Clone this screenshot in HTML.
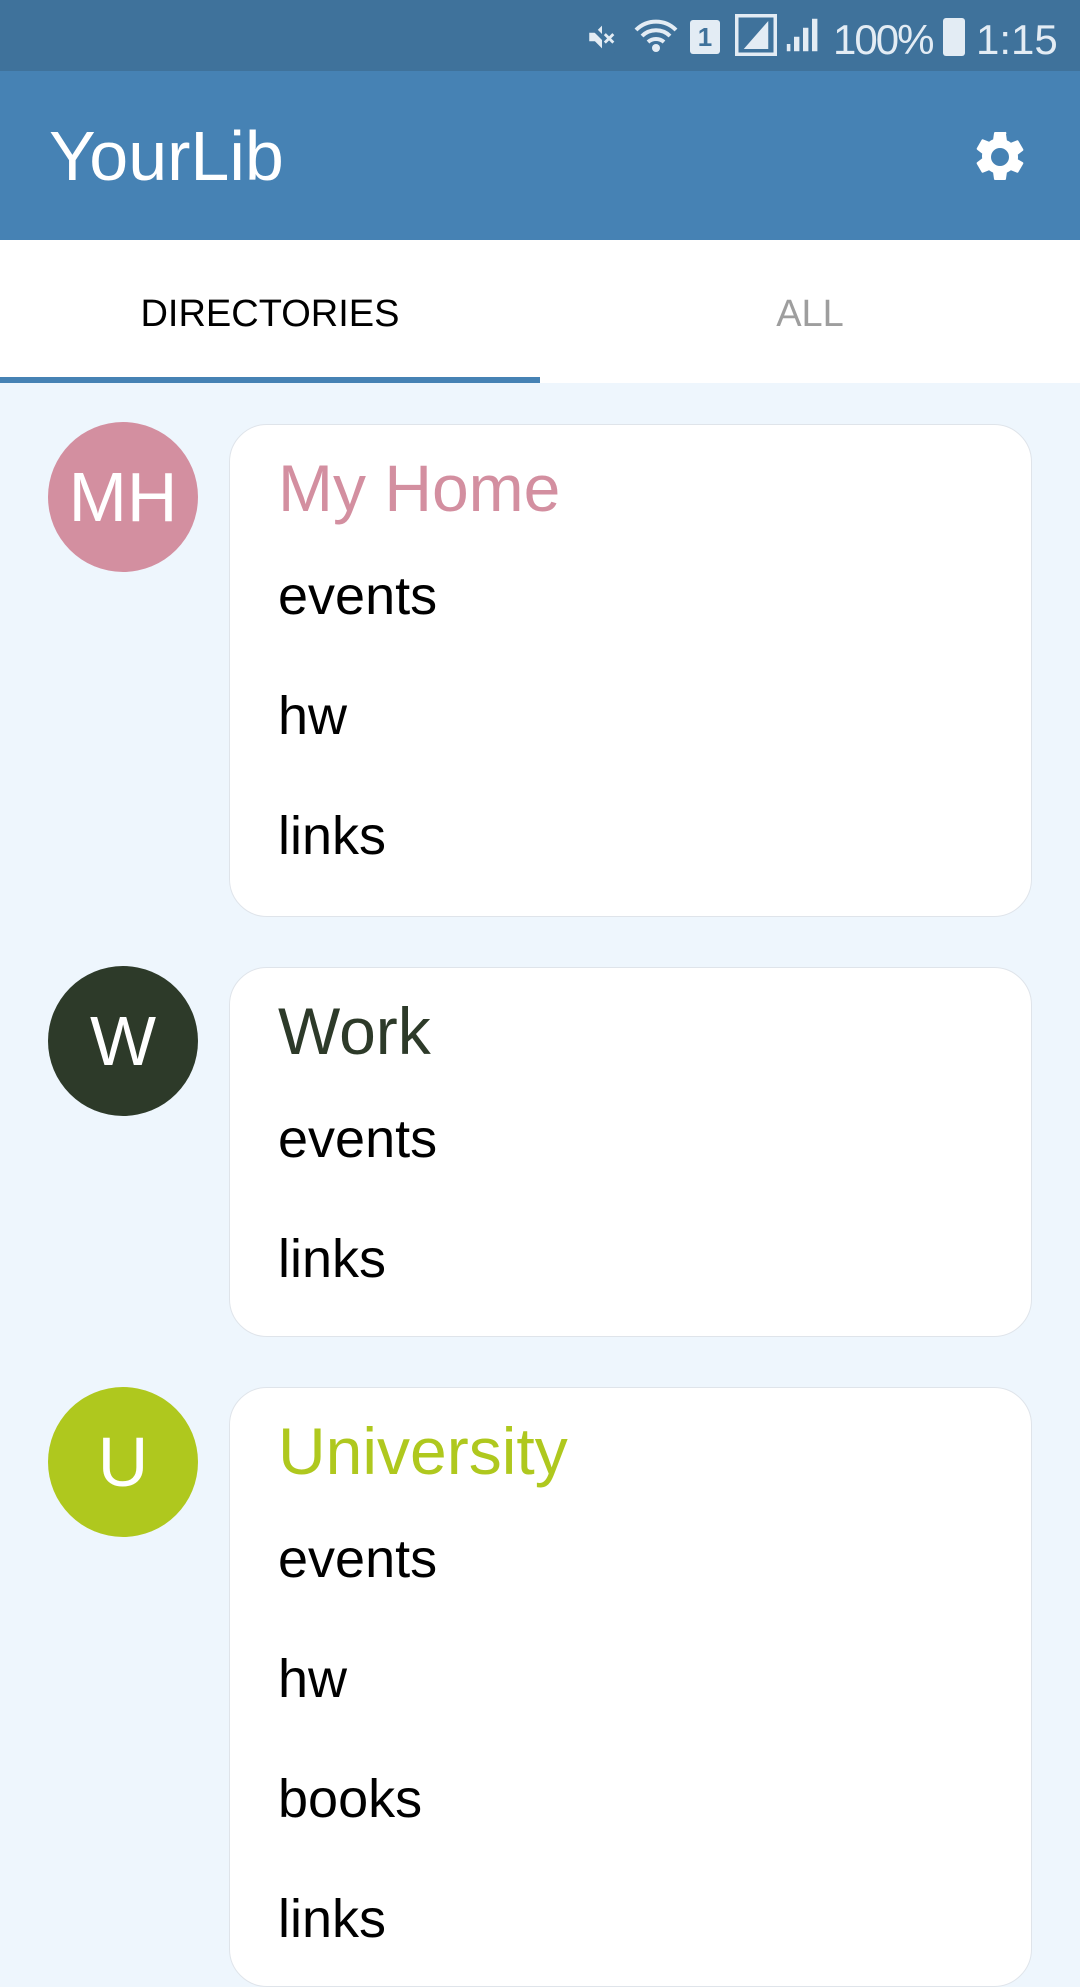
<!DOCTYPE html>
<html><head><meta charset="utf-8"><style>
*{margin:0;padding:0;box-sizing:border-box}
body{width:1080px;height:1920px;overflow:hidden;background:#EEF6FD;font-family:"Liberation Sans",sans-serif;position:relative}
.sb{position:absolute;left:0;top:0;width:1080px;height:71px;background:#3F729B;color:#E3ECF4;font-size:42px}
.ab{position:absolute;left:0;top:71px;width:1080px;height:169px;background:#4682B4}
.ab .t{position:absolute;left:49px;top:50px;color:#fff;font-size:70px;line-height:1}
.tabs{position:absolute;left:0;top:240px;width:1080px;height:143px;background:#fff}
.tab{position:absolute;top:55px;width:540px;text-align:center;font-size:38px;line-height:1}
.ind{position:absolute;left:0;top:377px;width:540px;height:6px;background:#4682B4}
.av{position:absolute;left:48px;width:150px;height:150px;border-radius:50%;color:#fff;font-size:70px;text-align:center;line-height:150px}
.card{position:absolute;left:229px;width:803px;background:#fff;border:1px solid #dfe4ea;border-radius:38px}
.ti{position:absolute;left:48px;font-size:66px;line-height:1}
.it{position:absolute;left:48px;font-size:54px;line-height:1;color:#000}
</style></head><body>
<div class="sb">
<svg style="position:absolute;left:585px;top:20px" width="34" height="34" viewBox="0 0 24 24"><path fill="#E3ECF4" d="M3 9h4l5-5v16l-5-5H3z"/><path stroke="#3F729B" stroke-width="3" d="M2 2l20 20"/><path stroke="#E3ECF4" stroke-width="2" d="M14 10l6 6M20 10l-6 6"/></svg>
<svg style="position:absolute;left:632px;top:16px" width="48" height="40" viewBox="0 0 24 20"><path fill="none" stroke="#E3ECF4" stroke-width="2" d="M2 7a14 14 0 0 1 20 0M5 10a10 10 0 0 1 14 0M8 13a6 6 0 0 1 8 0"/><circle cx="12" cy="16" r="2" fill="#E3ECF4"/></svg>
<div style="position:absolute;left:690px;top:20px;width:30px;height:34px;background:#E3ECF4;border-radius:3px;color:#3F729B;font-size:26px;font-weight:bold;text-align:center;line-height:34px">1</div>
<svg style="position:absolute;left:735px;top:14px" width="42" height="42" viewBox="0 0 24 24"><rect x="1" y="1" width="22" height="22" fill="none" stroke="#E3ECF4" stroke-width="2"/><path fill="#E3ECF4" d="M19 4v16H5z"/></svg>
<svg style="position:absolute;left:785px;top:16px" width="36" height="38" viewBox="0 0 20 20"><path fill="#E3ECF4" d="M18 1v18h-3V1zM13 6v13h-3V6zM8 11v8H5v-8zM3 15v4H1v-4z"/></svg>
<div style="position:absolute;left:833px;top:16px;letter-spacing:-2px">100%</div>
<div style="position:absolute;left:943px;top:18px;width:22px;height:38px;background:#E3ECF4;border-radius:3px"></div>
<div style="position:absolute;left:976px;top:16px">1:15</div>
</div>
<div class="ab"><div class="t">YourLib</div>
<svg style="position:absolute;left:970px;top:56px" width="60" height="60" viewBox="0 0 24 24"><path fill="#fff" d="M19.14 12.94c.04-.3.06-.61.06-.94s-.02-.64-.07-.94l2.03-1.58a.49.49 0 0 0 .12-.61l-1.92-3.320a.49.49 0 0 0-.59-.22l-2.39.96c-.5-.38-1.030-.7-1.62-.94l-.36-2.54A.48.48 0 0 0 13.92 2h-3.84c-.24 0-.43.17-.47.41l-.36 2.54c-.59.24-1.13.57-1.62.94l-2.39-.96a.48.48 0 0 0-.59.22L2.74 8.47c-.12.21-.08.47.12.61l2.03 1.58c-.05.3-.09.63-.09.94s.02.64.07.94l-2.03 1.58a.49.49 0 0 0-.12.61l1.92 3.32c.12.22.37.29.59.22l2.39-.96c.5.38 1.03.7 1.62.94l.36 2.54c.05.24.24.41.48.41h3.84c.24 0 .44-.17.47-.41l.36-2.54c.59-.24 1.13-.56 1.62-.94l2.39.96c.22.08.47 0 .59-.22l1.92-3.32c.12-.22.07-.47-.12-.61zM12 15.6A3.6 3.6 0 1 1 12 8.4a3.6 3.6 0 0 1 0 7.2z"/></svg></div>
<div class="tabs"><div class="tab" style="left:0;color:#000">DIRECTORIES</div><div class="tab" style="left:540px;color:#9E9E9E">ALL</div></div>
<div class="ind"></div>

<div class="av" style="top:422px;background:#D38FA0">MH</div>
<div class="card" style="top:424px;height:493px">
<div class="ti" style="top:30px;color:#D38FA0">My Home</div>
<div class="it" style="top:144px">events</div>
<div class="it" style="top:264px">hw</div>
<div class="it" style="top:384px">links</div>
</div>

<div class="av" style="top:966px;background:#2D3A29">W</div>
<div class="card" style="top:967px;height:370px">
<div class="ti" style="top:30px;color:#2D3A29">Work</div>
<div class="it" style="top:144px">events</div>
<div class="it" style="top:264px">links</div>
</div>

<div class="av" style="top:1387px;background:#AFC81E">U</div>
<div class="card" style="top:1387px;height:600px">
<div class="ti" style="top:30px;color:#AFC81E">University</div>
<div class="it" style="top:144px">events</div>
<div class="it" style="top:264px">hw</div>
<div class="it" style="top:384px">books</div>
<div class="it" style="top:504px">links</div>
</div>
</body></html>
